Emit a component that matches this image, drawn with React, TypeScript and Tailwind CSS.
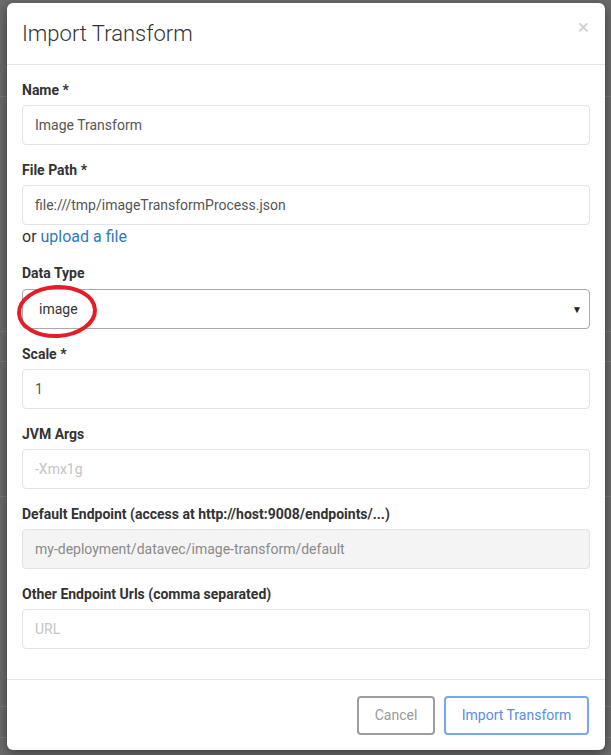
import React from "react";

const font = { fontFamily: "Roboto, 'Noto Sans', 'Liberation Sans', sans-serif" };

function Label({ children, mb = "mb-[5px]" }: { children: React.ReactNode; mb?: string }) {
  return (
    <div className={mb + " h-[20px] text-[14px] font-bold leading-[20px] text-[#333]"}>
      {children}
    </div>
  );
}

function Input({ value, placeholder, disabled }: { value?: string; placeholder?: string; disabled?: boolean }) {
  return (
    <div
      className={
        "flex h-[40px] items-center rounded-[4px] border px-[12px] text-[14px] " +
        (disabled ? "border-[#e3e3e3] bg-[#f4f4f4] text-[#8a8a8a]" : "border-[#e3e3e3] bg-white text-[#555]")
      }
    >
      {value ? <span>{value}</span> : <span className="text-[#c4c4c4]">{placeholder}</span>}
    </div>
  );
}

function Field({ label, children }: { label: string; children: React.ReactNode }) {
  return (
    <div className="mb-[15px]">
      <Label>{label}</Label>
      {children}
    </div>
  );
}

export default function App() {
  return (
    <div className="relative h-[755px] w-[611px] overflow-hidden bg-[#6b6b6b]" style={font}>
      {/* dimmed page behind */}
      <div className="flex flex-col">
        <div className="h-[97px] border-b border-[#7a7a7a]" />
        <div className="h-[235px] border-b border-[#7a7a7a]" />
        <div className="h-[30px] border-b border-[#7a7a7a]" />
        <div className="h-[135px] border-b border-[#7a7a7a]" />
        <div className="h-[210px] border-b border-[#7a7a7a]" />
        <div className="h-[31px] border-b border-[#7a7a7a]" />
      </div>

      {/* modal overlay */}
      <div className="absolute inset-0 pl-[7px] pt-[3px]">
        <div className="flex w-[598px] flex-col rounded-[6px] bg-white shadow-[0_3px_12px_rgba(0,0,0,0.45)]">
          {/* header */}
          <div className="flex h-[62px] items-center justify-between border-b border-[#e5e5e5] pl-[15px] pr-[16px]">
            <div className="text-[22px] font-light leading-none text-[#333]">Import Transform</div>
            <div className="mb-[12px] text-[21px] leading-none text-[#cfcfcf]">×</div>
          </div>

          {/* body */}
          <div className="px-[15px] pt-[15px]">
            <Field label="Name *">
              <Input value="Image Transform" />
            </Field>

            <div className="mb-[15px]">
              <Label>File Path *</Label>
              <Input value="file:///tmp/imageTransformProcess.json" />
              <div className="mt-[2px] h-[21px] text-[16px] leading-[20px] text-[#333]">
                or <span className="text-[#337ab7]">upload a file</span>
              </div>
            </div>

            <div className="mb-[15px]">
              <Label mb="mb-[6px]">Data Type</Label>
              <div className="relative">
                <div className="flex h-[40px] items-center justify-between rounded-[4px] border border-[#a9a9a9] pl-[16px] pr-[7px] text-[14px] text-[#333]">
                  <span>image</span>
                  <span className="text-[10px] text-[#222]">▼</span>
                </div>
                <svg
                  className="pointer-events-none absolute left-[-6px] top-[-5px]"
                  width="84"
                  height="58"
                  viewBox="0 0 84 58"
                >
                  <ellipse
                    cx="41"
                    cy="27.5"
                    rx="38"
                    ry="24.5"
                    fill="none"
                    stroke="#e41e26"
                    strokeWidth="4"
                    transform="rotate(-3 41 27.5)"
                  />
                </svg>
              </div>
            </div>

            <Field label="Scale *">
              <Input value="1" />
            </Field>

            <Field label="JVM Args">
              <Input placeholder="-Xmx1g" />
            </Field>

            <Field label="Default Endpoint (access at http://host:9008/endpoints/...)">
              <Input value="my-deployment/datavec/image-transform/default" disabled />
            </Field>

            <Field label="Other Endpoint Urls (comma separated)">
              <Input placeholder="URL" />
            </Field>
            <div className="h-[15px]" />
          </div>

          {/* footer */}
          <div className="flex justify-end gap-[9px] border-t border-[#e5e5e5] px-[16px] pb-[15px] pt-[16px]">
            <button className="h-[39px] w-[78px] rounded-[4px] border-2 border-[#9e9e9e] bg-white text-[14px] text-[#9a9a9a]">
              Cancel
            </button>
            <button className="h-[39px] w-[145px] rounded-[4px] border-2 border-[#79a6f2] bg-white text-[14px] text-[#5b8cea]">
              Import Transform
            </button>
          </div>
        </div>
      </div>
    </div>
  );
}
